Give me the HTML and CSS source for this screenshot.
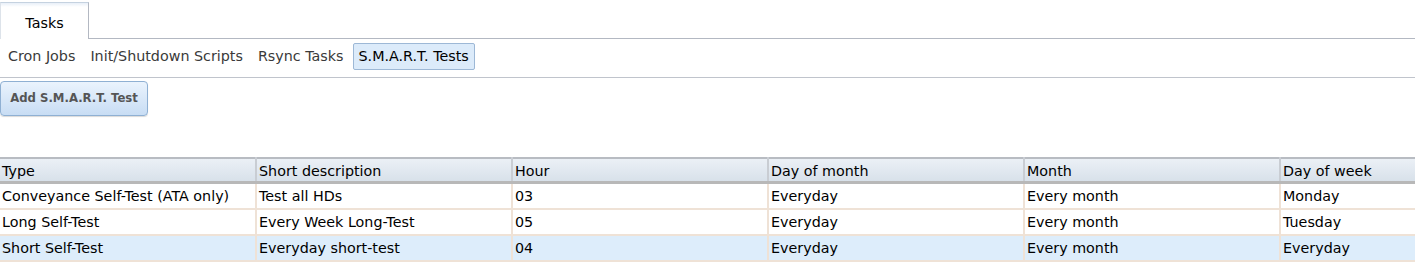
FILE: index.html
```html
<!DOCTYPE html>
<html>
<head>
<meta charset="utf-8">
<link rel="stylesheet" href="styles.css">
</head>
<body>
<div class="tabbar">
  <div class="tab active">Tasks</div>
  <div class="tabfill"></div>
</div>
<div class="subtabs">
  <span class="subtab">Cron Jobs</span>
  <span class="subtab">Init/Shutdown Scripts</span>
  <span class="subtab">Rsync Tasks</span>
  <span class="subtab selected">S.M.A.R.T. Tests</span>
</div>
<div class="toolbar">
  <button class="addbtn">Add S.M.A.R.T. Test</button>
</div>
<table class="grid">
  <colgroup>
    <col class="c">
    <col class="c">
    <col class="c">
    <col class="c">
    <col class="c">
    <col>
  </colgroup>
  <thead>
    <tr>
      <th>Type</th>
      <th>Short description</th>
      <th>Hour</th>
      <th>Day of month</th>
      <th>Month</th>
      <th class="last">Day of week</th>
    </tr>
  </thead>
  <tbody>
    <tr>
      <td>Conveyance Self-Test (ATA only)</td>
      <td>Test all HDs</td>
      <td>03</td>
      <td>Everyday</td>
      <td>Every month</td>
      <td>Monday</td>
    </tr>
    <tr>
      <td>Long Self-Test</td>
      <td>Every Week Long-Test</td>
      <td>05</td>
      <td>Everyday</td>
      <td>Every month</td>
      <td>Tuesday</td>
    </tr>
    <tr class="sel">
      <td>Short Self-Test</td>
      <td>Everyday short-test</td>
      <td>04</td>
      <td>Everyday</td>
      <td>Every month</td>
      <td>Everyday</td>
    </tr>
  </tbody>
</table>
</body>
</html>
```
FILE: styles.css
```css
html, body {
  margin: 0;
  padding: 0;
  background: #fff;
  font-family: "DejaVu Sans", Verdana, sans-serif;
  font-size: 14.3px;
  color: #000;
}
.tabbar {
  display: flex;
  height: 39px;
  padding-top: 2px;
  box-sizing: border-box;
}
.tab {
  width: 89px;
  box-sizing: border-box;
  border-top: 1px solid #c5d2e0;
  border-right: 1px solid #b3b8c2;
  border-left: 1px solid #dde3ea;
  background: linear-gradient(#e8eff8 0, #fff 4px, #fff 100%);
  display: flex;
  align-items: center;
  justify-content: center;
  font-size: 14.3px;
  color: #000;
  padding-top: 4px;
}
.tabfill {
  flex: 1;
  border-bottom: 1px solid #b3b8c2;
}
.subtabs {
  display: flex;
  align-items: center;
  gap: 3px;
  height: 39px;
  box-sizing: border-box;
  border-bottom: 1px solid #c0c4cc;
  padding-left: 2px;
  padding-bottom: 3px;
}
.subtab {
  padding: 4px 5px 5px 5px;
  color: #3a3a3a;
  border: 1px solid transparent;
  border-radius: 2px;
}
.subtab.selected {
  background: #dcebfa;
  border-color: #9db8d6;
  color: #000;
}
.toolbar {
  padding-top: 3px;
  height: 79px;
  box-sizing: border-box;
}
.addbtn {
  font-family: "DejaVu Sans", Verdana, sans-serif;
  font-size: 11.7px;
  font-weight: bold;
  color: #555;
  width: 148px;
  height: 35px;
  border: 1px solid #8fb0d3;
  border-radius: 4px;
  background: linear-gradient(#eaf3fd, #c8ddf4);
  box-shadow: 0 1px 1px rgba(0,0,0,0.15);
  padding: 0 0 2px 0;
  margin: 0;
}
.grid {
  width: 100%;
  border-collapse: collapse;
  table-layout: fixed;
  border-top: 2px solid #b8bcc2;
}
.grid col.c {
  width: 256px;
}
.grid th {
  height: 21px;
  text-align: left;
  font-weight: normal;
  padding: 1px 3px 0 2px;
  background: linear-gradient(#ebf0f6, #d8e1ea);
  border-right: 2px solid #c9cdd3;
  border-bottom: 3px solid #b8b8b8;
  color: #000;
  white-space: nowrap;
}
.grid th.last {
  border-left: 2px solid #b8bcc2;
  border-right: none;
}
.grid td {
  height: 23px;
  padding: 0 3px 1px 2px;
  border-right: 2px solid #efe2d6;
  border-bottom: 2px solid #efe2d6;
  white-space: nowrap;
  overflow: hidden;
}
.grid td:last-child {
  border-right: none;
}
.grid tr.sel td {
  background: #ddedfb;
}
```
